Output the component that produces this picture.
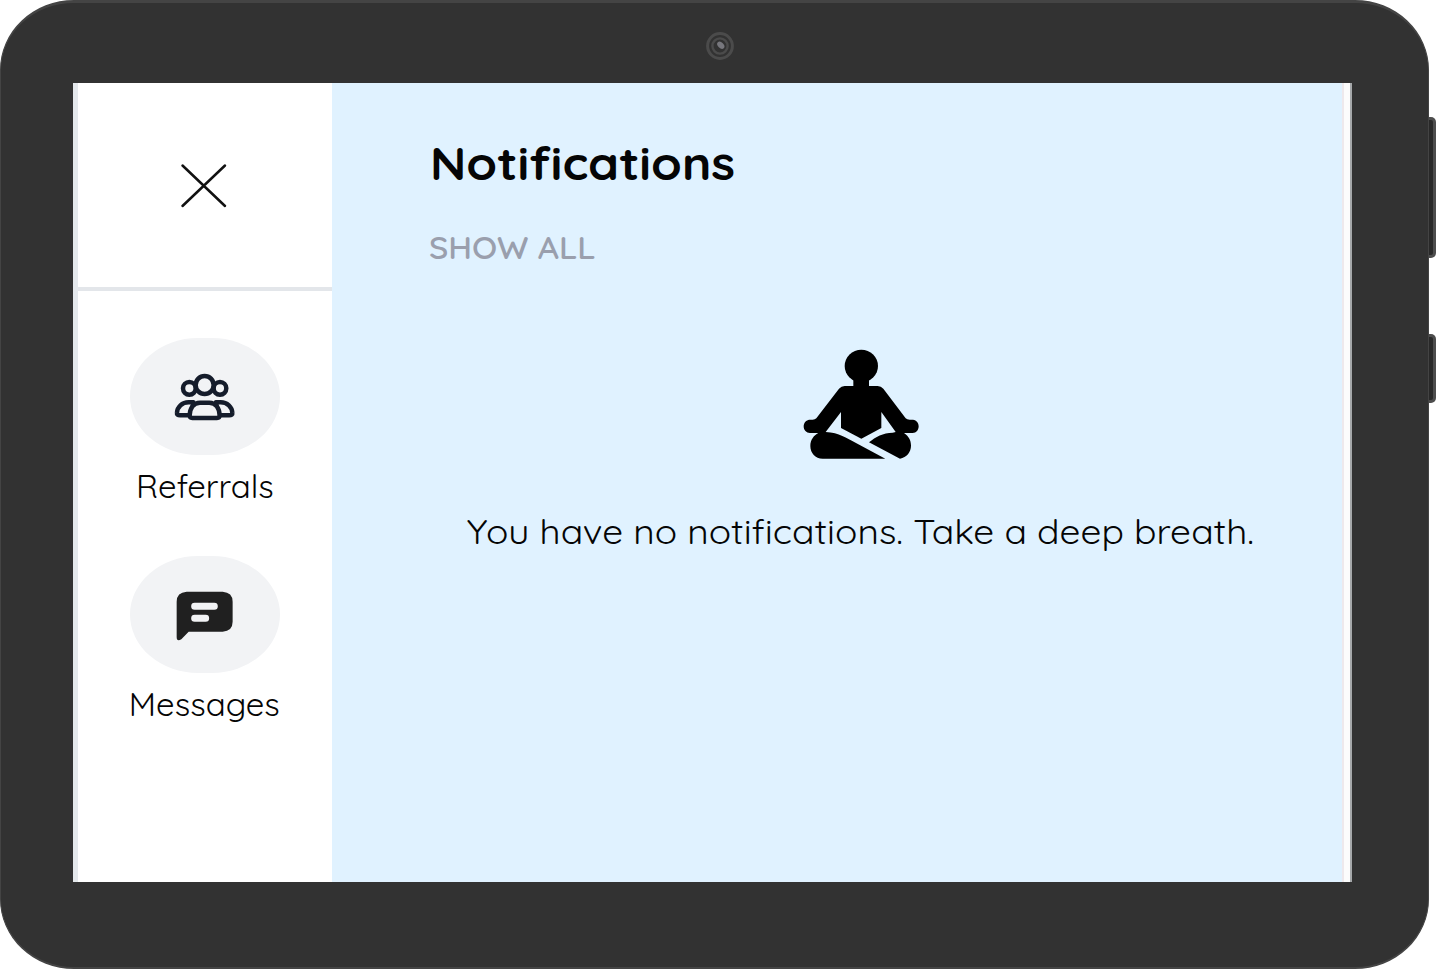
<svelte:head><title>Notifications</title></svelte:head>

<div class="device">
  <div class="tablet">
    <header class="bezel-top">
      <svg class="camera" viewBox="0 0 28 28" aria-hidden="true">
        <circle cx="14" cy="14" r="12.4" fill="none" stroke="#4b4b4b" stroke-width="3" />
        <circle cx="14" cy="14" r="7.6" fill="none" stroke="#4b4b4b" stroke-width="2.4" />
        <ellipse cx="14.8" cy="13.2" rx="4.2" ry="2.8" transform="rotate(45 14.8 13.2)" fill="#77777d" />
      </svg>
    </header>

    <div class="screen">
      <nav class="sidebar">
        <button class="close" aria-label="Close">
          <svg viewBox="0 0 48 46"><path d="M2.5 2.5 45 43M45 2.5 2.5 43" /></svg>
        </button>
        <div class="links">
          <a class="item" href="#referrals">
            <span class="pill">
              <svg class="people" viewBox="160 126 184 144">
                <circle cx="206" cy="172" r="19" />
                <circle cx="298" cy="172" r="19" />
                <circle cx="252" cy="162" r="27" />
                <path d="M218 214H204C184 214 170 228 169 245C168 251 172 253 178 253H212Z" />
                <path d="M286 214H300C320 214 334 228 335 245C336 251 332 253 326 253H292Z" />
                <path d="M238 215H266C286 215 296 232 297 253C297 259 294 261 289 261H215C210 261 207 259 207 253C208 232 218 215 238 215Z" />
              </svg>
            </span>
            <span class="label">Referrals</span>
          </a>
          <a class="item" href="#messages">
            <span class="pill">
              <svg class="message" viewBox="166 122 172 150">
                <path d="M198 124H306Q336 126 336 154V214Q336 242 306 244H204L182 267Q168 275 168 260V154Q168 126 198 124Z" fill="#202020" />
                <path d="M222 168H281M222 204H255" fill="none" stroke="#f2f3f5" stroke-width="21" stroke-linecap="round" />
              </svg>
            </span>
            <span class="label">Messages</span>
          </a>
        </div>
      </nav>

      <main>
        <h1>Notifications</h1>
        <button class="show-all">SHOW ALL</button>
        <section class="empty">
          <svg class="meditate" viewBox="40 40 348 332" aria-hidden="true">
            <ellipse cx="215" cy="91" rx="50" ry="49" />
            <path d="M191 125H238V151H264Q274 151 281 159L348 248Q352 252 360 252H370C381 253 387 262 387 272C387 283 380 292 369 292H343C357 301 364 314 364 330C364 349 351 365 331 369L238 320C258 303 280 292 309 291L318 289L275 229V277L215 309L154 277V229L108 289C150 291 169 307 199 322L287 369H99C77 369 62 352 62 331C62 313 72 299 86 292H61C50 292 42 284 42 272C42 260 51 252 62 252H69Q76 252 80 248L148 159Q155 151 165 151H191Z" />
          </svg>
          <p>You have no notifications. Take a deep breath.</p>
        </section>
      </main>
      <div class="scroll"></div>
    </div>
  </div>
  <div class="keys"><i class="volume"></i><i class="power"></i></div>
</div>

<style>
  :global(body) { margin: 0; background: #fff; }
  .device {
    width: 1436px;
    height: 969px;
    display: flex;
    overflow: hidden;
    font-family: Quicksand, Inter, sans-serif;
    color: #050505;
  }
  .tablet {
    box-sizing: border-box;
    width: 1429px;
    height: 969px;
    padding: 0 76px 0 72px;
    border: 1px solid #444;
    border-width: 3px 1px 2px;
    border-radius: 74px / 70px;
    background: #323232;
    flex: none;
  }
  .bezel-top { height: 80px; display: flex; justify-content: center; padding-left: 15px; }
  .camera { width: 28px; height: 28px; margin-top: 28.5px; }
  .screen { width: 1279px; height: 799px; display: flex; background: #fff; }
  .sidebar {
    box-sizing: border-box;
    width: 259px;
    border-left: 5px solid #e4e8ec;
    flex: none;
  }
  button { border: 0; padding: 0; background: none; font: inherit; }
  .close {
    width: 254px;
    height: 208px;
    box-sizing: border-box;
    border-bottom: 4px solid #e3e6ea;
    display: flex;
    justify-content: center;
    padding-top: 79.5px;
  }
  .close svg { width: 48px; height: 46px; margin-right: 2px; fill: none; stroke: #111; stroke-width: 2.5; stroke-linecap: round; }
  .links { display: flex; flex-direction: column; padding-top: 46.5px; }
  .item { height: 218.5px; display: flex; flex-direction: column; align-items: center; color: inherit; text-decoration: none; }
  .pill {
    width: 150px;
    height: 117px;
    border-radius: 68px / 58.5px;
    background: #f2f3f5;
    display: flex;
    justify-content: center;
    align-items: center;
  }
  .people { width: 61.3px; height: 48px; margin: 1px 1px 0 0; fill: #f2f3f5; stroke: #151c2b; stroke-width: 13.5; stroke-linejoin: round; }
  .message { width: 57.3px; height: 50px; margin: 3px 1px 0 0; }
  .label { margin: 10px 1px 0 0; font-size: 32px; line-height: 42px; font-weight: 400; white-space: nowrap; transform: scaleX(1.03); }
  main { width: 1010px; background: #e0f2ff; display: flex; flex-direction: column; align-items: flex-start; flex: none; }
  h1 { margin: 52px 0 0 97.5px; font-size: 46px; line-height: 56px; font-weight: 700; white-space: nowrap; transform: scaleX(1.075); transform-origin: left; }
  .show-all { margin: 36px 0 0 97px; height: 40px; font-size: 32px; line-height: 40px; font-weight: 600; color: #9a9fad; white-space: nowrap; transform: scaleX(1.033); transform-origin: left; }
  .empty { width: 100%; display: flex; flex-direction: column; align-items: center; }
  .meditate { width: 116px; height: 110.7px; margin: 81.5px 0 0 48px; }
  p { margin: 50px 0 0 47px; font-size: 35px; line-height: 44px; font-weight: 400; white-space: nowrap; transform: scaleX(1.06); }
  .scroll { box-sizing: border-box; width: 10px; border-left: 2px solid #eee9ec; border-right: 2px solid #a5a8aa; background: #fcfcfc; }
  .keys { width: 7px; padding-top: 117px; flex: none; }
  .keys i {
    display: block;
    box-sizing: border-box;
    border: 3px solid #4d4d4d;
    border-left: 0;
    border-radius: 0 5px 5px 0;
    background: #292929;
  }
  .volume { height: 141px; }
  .power { height: 69px; margin-top: 76px; }
</style>
